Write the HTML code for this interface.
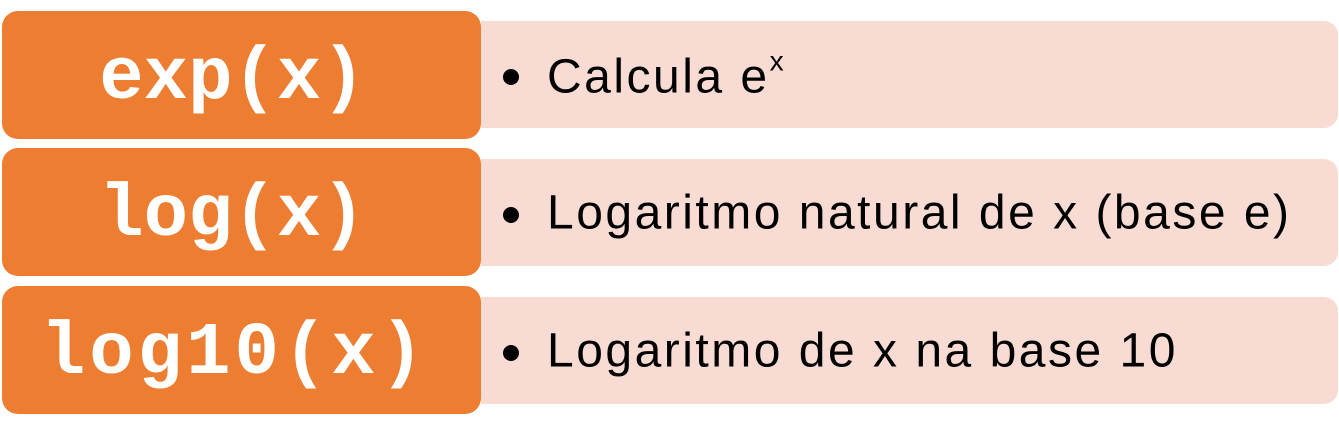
<!DOCTYPE html>
<html><head><style>
body{margin:0;width:1339px;height:443px;background:#fff;position:relative;overflow:hidden}
.o{position:absolute;left:2px;width:479px;height:128px;background:#ED7D31;border-radius:16px;color:#fff;font-family:"Liberation Mono",monospace;font-weight:bold;font-size:74px;display:flex;align-items:center;justify-content:center;box-sizing:border-box;padding-right:18px;padding-top:8px}
.p{position:absolute;left:481px;width:857px;height:107px;background:#F8DBD2;border-radius:0 14px 14px 0;font-family:"Liberation Sans",sans-serif;font-size:48px;color:#000}
.p span.b{position:absolute;left:22px;top:50%;width:16px;height:16px;margin-top:-6px;background:#000;border-radius:50%}
.p span.t{position:absolute;left:66px;top:50%;transform:translateY(-50%);white-space:nowrap;letter-spacing:2.5px}
</style></head><body>
<div class="p" style="top:21px"><span class="b"></span><span class="t">Calcula e<sup style="font-size:28px;vertical-align:22px">x</sup></span></div>
<div class="p" style="top:159px"><span class="b"></span><span class="t">Logaritmo natural de x (base e)</span></div>
<div class="p" style="top:297px"><span class="b"></span><span class="t">Logaritmo de x na base 10</span></div>
<div class="o" style="top:11px">exp(x)</div>
<div class="o" style="top:148px">log(x)</div>
<div class="o" style="top:286px;letter-spacing:4px;padding-right:14px">log10(x)</div>
</body></html>
